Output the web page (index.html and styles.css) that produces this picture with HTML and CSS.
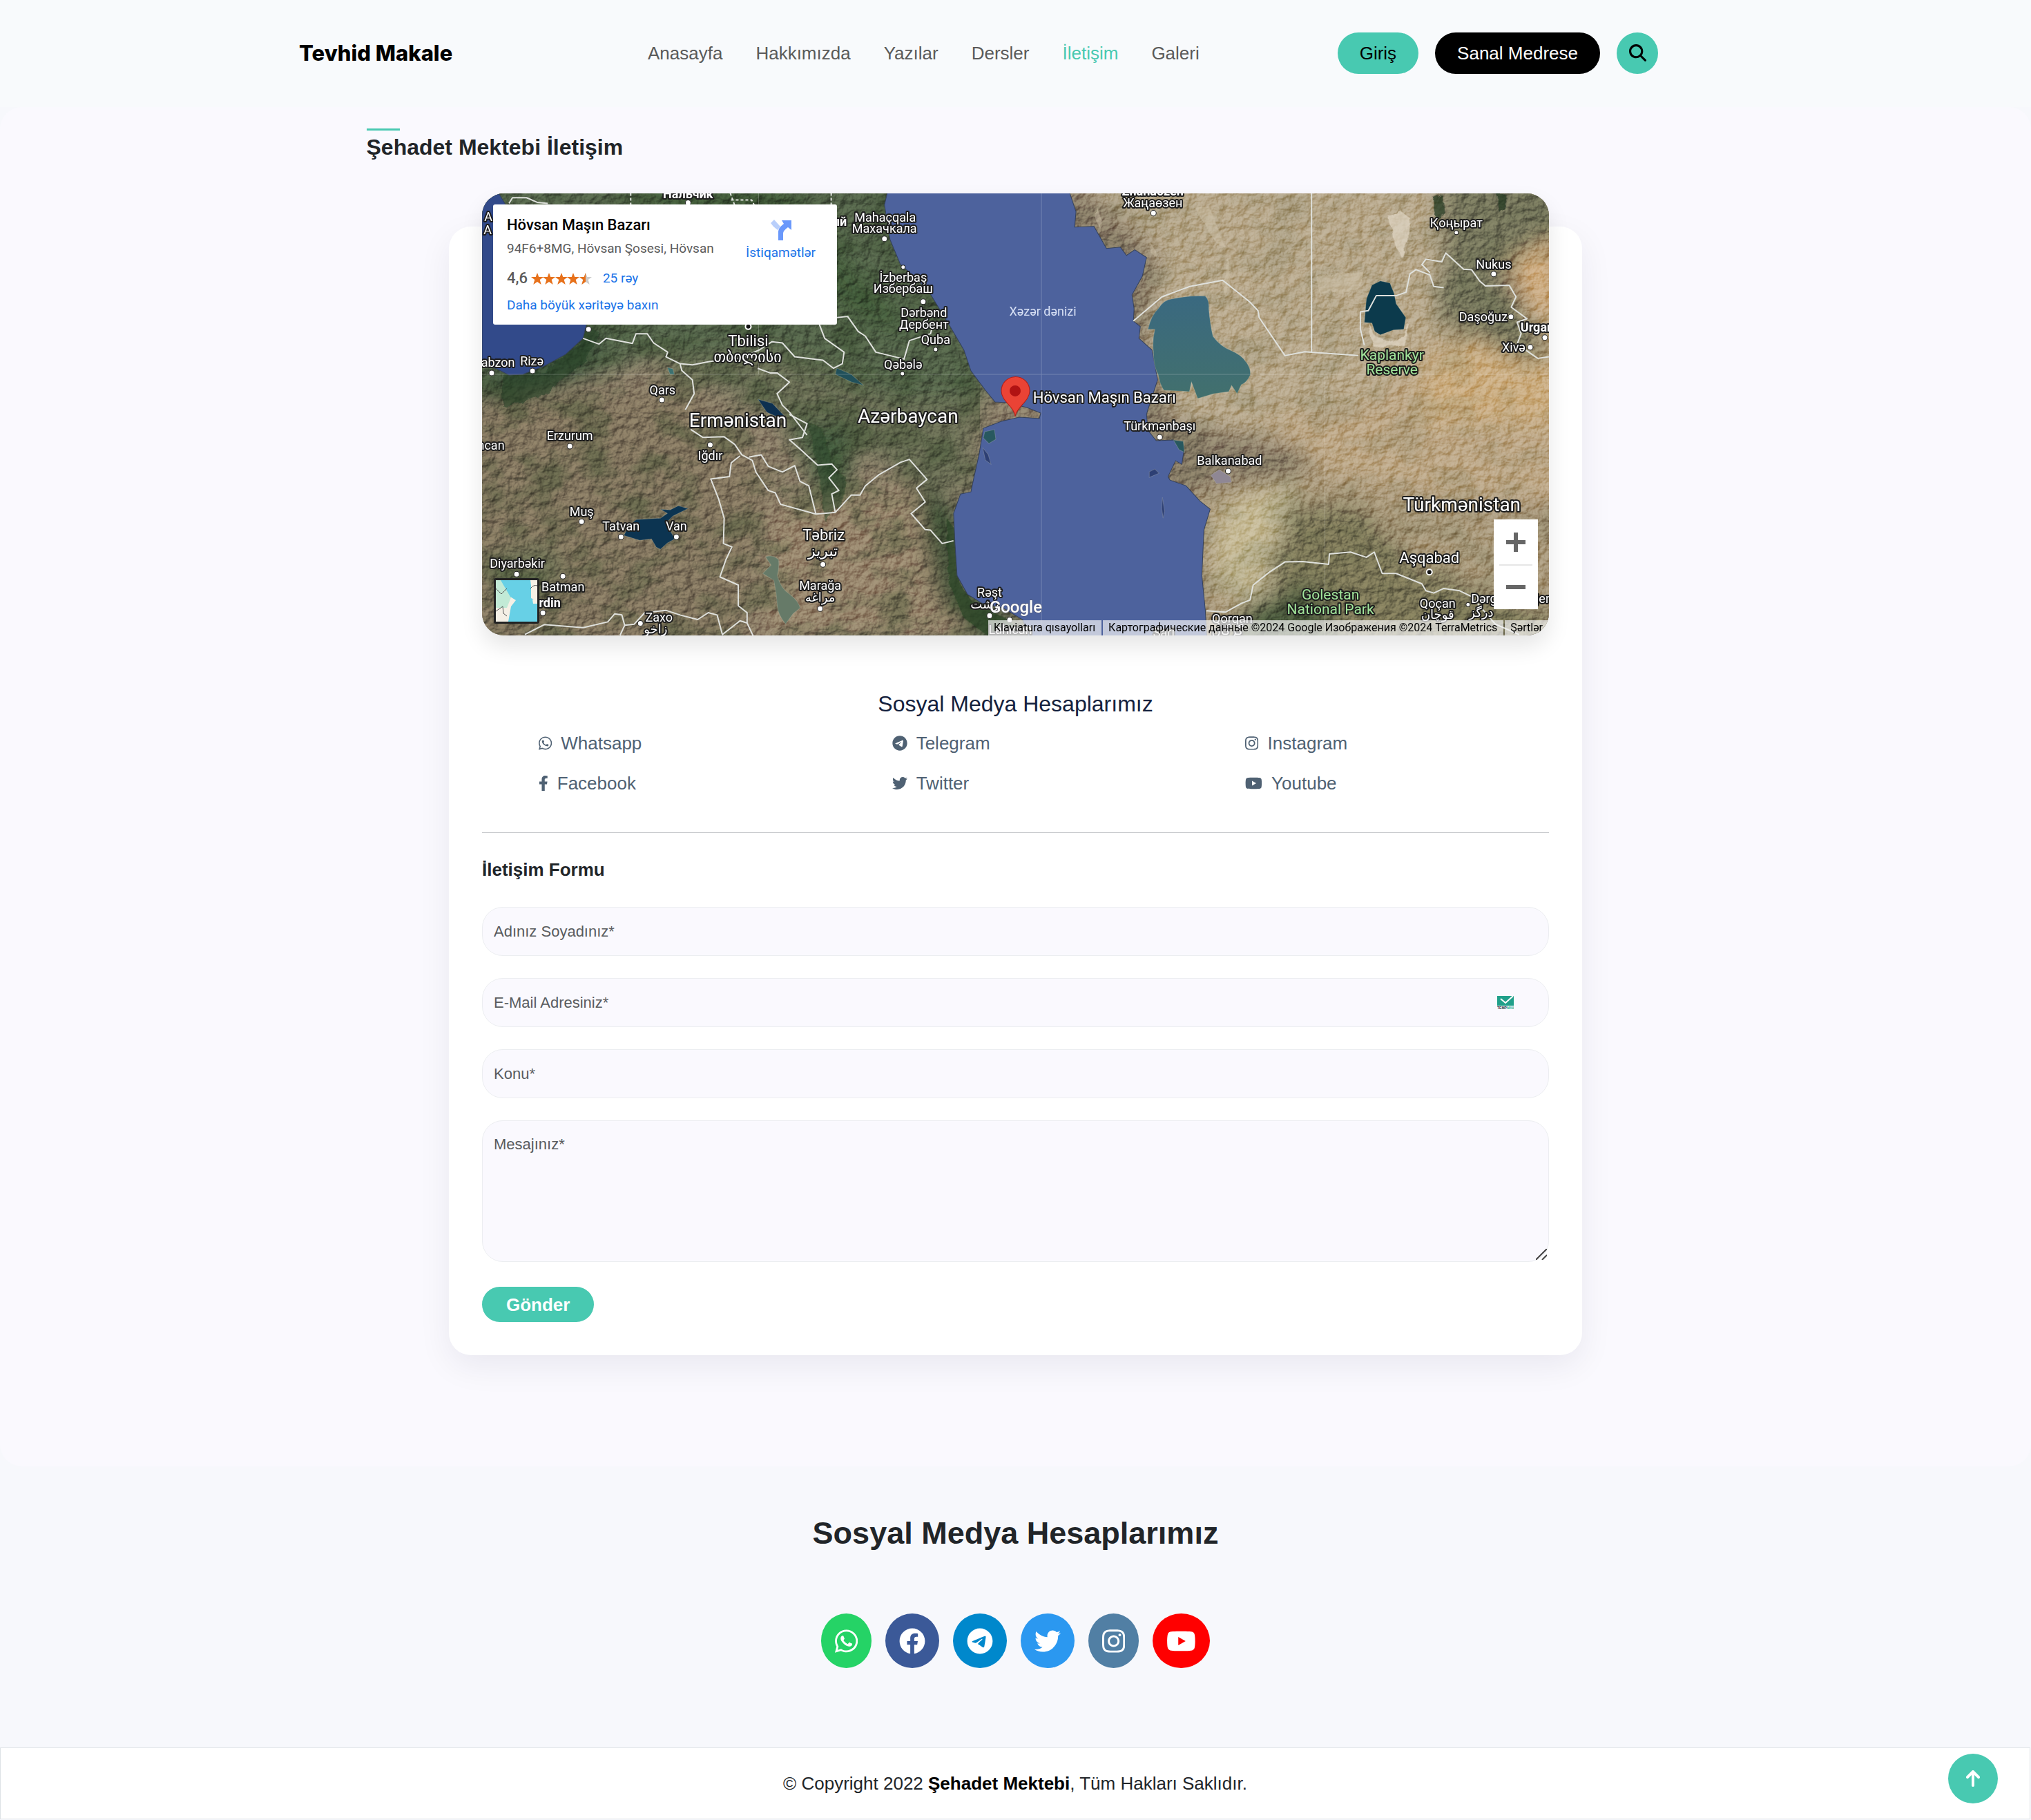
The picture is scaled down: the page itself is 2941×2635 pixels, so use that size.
FILE: index.html
```html
<!DOCTYPE html>
<html lang="tr">
<head>
<meta charset="utf-8">
<meta name="viewport" content="width=device-width, initial-scale=1">
<title>Tevhid Makale - İletişim</title>
<link rel="stylesheet" href="styles.css">
</head>
<body>
<svg class="sprite" aria-hidden="true">
  <symbol id="i-whatsapp" viewBox="0 0 448 512"><path d="M380.9 97.1C339 55.1 283.2 32 223.9 32c-122.4 0-222 99.6-222 222 0 39.1 10.2 77.3 29.6 111L0 480l117.7-30.9c32.4 17.7 68.9 27 106.1 27h.1c122.3 0 224.1-99.6 224.1-222 0-59.3-25.2-115-67.1-157zm-157 341.6c-33.2 0-65.7-8.9-94-25.7l-6.7-4-69.8 18.3L72 359.2l-4.4-7c-18.5-29.4-28.2-63.3-28.2-98.2 0-101.7 82.8-184.5 184.6-184.5 49.3 0 95.6 19.2 130.4 54.1 34.8 34.9 56.2 81.2 56.1 130.5 0 101.8-84.9 184.6-186.6 184.6zm101.2-138.2c-5.5-2.8-32.8-16.2-37.9-18-5.1-1.9-8.8-2.8-12.5 2.8-3.7 5.6-14.3 18-17.6 21.8-3.2 3.7-6.5 4.2-12 1.4-32.6-16.3-54-29.1-75.5-66-5.7-9.8 5.7-9.1 16.3-30.3 1.8-3.7.9-6.9-.5-9.7-1.4-2.8-12.5-30.1-17.1-41.2-4.5-10.8-9.1-9.3-12.5-9.5-3.2-.2-6.9-.2-10.6-.2-3.7 0-9.7 1.4-14.8 6.9-5.1 5.6-19.4 19-19.4 46.3 0 27.3 19.9 53.7 22.6 57.4 2.8 3.7 39.1 59.7 94.8 83.8 35.2 15.2 49 16.5 66.6 13.9 10.7-1.6 32.8-13.4 37.4-26.4 4.6-13 4.6-24.1 3.2-26.4-1.3-2.5-5-3.9-10.5-6.6z"/></symbol>
  <symbol id="i-facebook-f" viewBox="0 0 320 512"><path d="M279.14 288l14.22-92.66h-88.91v-60.13c0-25.35 12.42-50.06 52.24-50.06h40.42V6.26S260.43 0 225.36 0c-73.22 0-121.08 44.38-121.08 124.72v70.62H22.89V288h81.39v224h100.17V288z"/></symbol>
  <symbol id="i-facebook" viewBox="0 0 512 512"><path d="M504 256C504 119 393 8 256 8S8 119 8 256c0 123.78 90.69 226.38 209.25 245V327.69h-63V256h63v-54.64c0-62.15 37-96.48 93.67-96.48 27.14 0 55.52 4.84 55.52 4.84v61h-31.28c-30.8 0-40.41 19.12-40.41 38.73V256h68.78l-11 71.69h-57.78V501C413.31 482.38 504 379.78 504 256z"/></symbol>
  <symbol id="i-telegram" viewBox="0 0 496 512"><path d="M248,8C111.033,8,0,119.033,0,256S111.033,504,248,504,496,392.967,496,256,384.967,8,248,8ZM362.952,176.66c-3.732,39.215-19.881,134.378-28.1,178.3-3.476,18.584-10.322,24.816-16.948,25.425-14.4,1.326-25.338-9.517-39.287-18.661-21.827-14.308-34.158-23.215-55.346-37.177-24.485-16.135-8.612-25,5.342-39.5,3.652-3.793,67.107-61.51,68.335-66.746.153-.655.3-3.1-1.154-4.384s-3.59-.849-5.135-.5q-3.283.746-104.608,69.142-14.845,10.194-26.894,9.934c-8.855-.191-25.888-5.006-38.551-9.123-15.531-5.048-27.875-7.717-26.8-16.291q.84-6.7,18.45-13.7,108.446-47.248,144.628-62.3c68.872-28.647,83.183-33.623,92.511-33.789,2.052-.034,6.639.474,9.61,2.885a10.452,10.452,0,0,1,3.53,6.716A43.765,43.765,0,0,1,362.952,176.66Z"/></symbol>
  <symbol id="i-twitter" viewBox="0 0 512 512"><path d="M459.37 151.716c.325 4.548.325 9.097.325 13.645 0 138.72-105.583 298.558-298.558 298.558-59.452 0-114.68-17.219-161.137-47.106 8.447.974 16.568 1.299 25.34 1.299 49.055 0 94.213-16.568 130.274-44.832-46.132-.975-84.792-31.188-98.112-72.772 6.498.974 12.995 1.624 19.818 1.624 9.421 0 18.843-1.3 27.614-3.573-48.081-9.747-84.143-51.98-84.143-102.985v-1.299c13.969 7.797 30.214 12.67 47.431 13.319-28.264-18.843-46.781-51.005-46.781-87.391 0-19.492 5.197-37.36 14.294-52.954 51.655 63.675 129.3 105.258 216.365 109.807-1.624-7.797-2.599-15.918-2.599-24.04 0-57.828 46.782-104.934 104.934-104.934 30.213 0 57.502 12.67 76.67 33.137 23.715-4.548 46.456-13.32 66.599-25.34-7.798 24.366-24.366 44.833-46.132 57.827 21.117-2.273 41.584-8.122 60.426-16.243-14.292 20.791-32.161 39.308-52.628 54.253z"/></symbol>
  <symbol id="i-instagram" viewBox="0 0 448 512"><path d="M224.1 141c-63.6 0-114.9 51.3-114.9 114.9s51.3 114.9 114.9 114.9S339 319.5 339 255.9 287.7 141 224.1 141zm0 189.6c-41.1 0-74.7-33.5-74.7-74.7s33.5-74.7 74.7-74.7 74.7 33.5 74.7 74.7-33.6 74.7-74.7 74.7zm146.4-194.3c0 14.9-12 26.8-26.8 26.8-14.9 0-26.8-12-26.8-26.8s12-26.8 26.8-26.8 26.8 12 26.8 26.8zm76.1 27.2c-1.7-35.9-9.9-67.7-36.2-93.9-26.2-26.2-58-34.4-93.9-36.2-37-2.1-147.9-2.1-184.9 0-35.8 1.7-67.6 9.9-93.9 36.1s-34.4 58-36.2 93.9c-2.1 37-2.1 147.9 0 184.9 1.7 35.9 9.9 67.7 36.2 93.9s58 34.4 93.9 36.2c37 2.1 147.9 2.1 184.9 0 35.9-1.7 67.7-9.9 93.9-36.2 26.2-26.2 34.4-58 36.2-93.9 2.1-37 2.1-147.8 0-184.8zM398.8 388c-7.8 19.6-22.9 34.7-42.6 42.6-29.5 11.7-99.5 9-132.1 9s-102.7 2.6-132.1-9c-19.6-7.8-34.7-22.9-42.6-42.6-11.7-29.5-9-99.5-9-132.1s-2.6-102.7 9-132.1c7.8-19.6 22.9-34.7 42.6-42.6 29.5-11.7 99.5-9 132.1-9s102.7-2.6 132.1 9c19.6 7.8 34.7 22.9 42.6 42.6 11.7 29.5 9 99.5 9 132.1s2.7 102.7-9 132.1z"/></symbol>
  <symbol id="i-youtube" viewBox="0 0 576 512"><path d="M549.655 124.083c-6.281-23.65-24.787-42.276-48.284-48.597C458.781 64 288 64 288 64S117.22 64 74.629 75.486c-23.497 6.322-42.003 24.947-48.284 48.597-11.412 42.867-11.412 132.305-11.412 132.305s0 89.438 11.412 132.305c6.281 23.65 24.787 41.5 48.284 47.821C117.22 448 288 448 288 448s170.78 0 213.371-11.486c23.497-6.321 42.003-24.171 48.284-47.821 11.412-42.867 11.412-132.305 11.412-132.305s0-89.438-11.412-132.305zm-317.51 213.508V175.185l142.739 81.205-142.739 81.201z"/></symbol>
</svg>

<header class="site-header">
  <div class="header-inner">
    <a class="logo" href="#">Tevhid Makale</a>
    <nav class="main-nav">
      <a href="#">Anasayfa</a>
      <a href="#">Hakkımızda</a>
      <a href="#">Yazılar</a>
      <a href="#">Dersler</a>
      <a href="#" class="active" aria-current="page">İletişim</a>
      <a href="#">Galeri</a>
    </nav>
    <div class="header-actions">
      <a class="pill pill-teal" href="#">Giriş</a>
      <a class="pill pill-black" href="#">Sanal Medrese</a>
      <button class="search-btn" type="button" aria-label="Ara">
        <svg viewBox="0 0 512 512" width="25" height="25"><path d="M416 208c0 45.9-14.9 88.3-40 122.7L502.6 457.4c12.5 12.5 12.5 32.8 0 45.3s-32.8 12.5-45.3 0L330.7 376c-34.4 25.2-76.8 40-122.7 40C93.1 416 0 322.9 0 208S93.1 0 208 0S416 93.1 416 208zM208 352a144 144 0 1 0 0-288 144 144 0 1 0 0 288z"/></svg>
      </button>
    </div>
  </div>
</header>

<main class="contact">
  <div class="title-wrap">
    <h1 class="page-title">Şehadet Mektebi İletişim</h1>
  </div>

  <section class="card">
    <div class="map">
      <svg class="map-canvas" viewBox="0 0 1543 640" preserveAspectRatio="xMidYMid slice" role="img" aria-label="Xəritə">
        <defs>
          <filter id="soft" x="-20%" y="-20%" width="140%" height="140%"><feGaussianBlur stdDeviation="16"/></filter>
          <filter id="relief" x="0" y="0" width="100%" height="100%" color-interpolation-filters="sRGB">
            <feTurbulence type="fractalNoise" baseFrequency="0.07 0.08" numOctaves="6" seed="11" result="n"/>
            <feDiffuseLighting in="n" surfaceScale="5" diffuseConstant="0.65" lighting-color="#fff"><feDistantLight azimuth="225" elevation="52"/></feDiffuseLighting>
          </filter>
          <filter id="patch" x="0" y="0" width="100%" height="100%">
            <feTurbulence type="fractalNoise" baseFrequency="0.016 0.024" numOctaves="7" seed="4"/>
            <feColorMatrix values="0 0 0 0 .03  0 0 0 0 .06  0 0 0 0 .02  3.6 0 0 0 -1.6"/>
          </filter>
          <filter id="rough"><feTurbulence type="fractalNoise" baseFrequency="0.06" numOctaves="3" seed="2"/><feDisplacementMap in="SourceGraphic" scale="9"/></filter>
          <linearGradient id="gulf" x1="0" y1="0" x2="0" y2="1"><stop offset="0" stop-color="#3a6980"/><stop offset="1" stop-color="#42706d"/></linearGradient>
        </defs>
        <rect width="1543" height="640" fill="#8a7d68"/>
        <g filter="url(#soft)">
          <path fill="#536448" d="M-40-40H620L740 290L560 330L420 270L260 230L60 300L-40 290z"/>
          <path fill="#3a5038" d="M80 205L180 190L160 260L60 300L-20 300L20 260z"/>
          <path fill="#405839" d="M200-30H420L520 90L640 210L560 190L420 100L240 20z"/>
          <path fill="#686c52" d="M240 240L420 230L600 300L720 300L700 440L600 400L500 350L380 300z"/>
          <path fill="#41573a" d="M430 330L540 330L530 430L490 470L470 380z"/>
          <path fill="#83765f" d="M40 300L300 280L420 400L380 660H-40V320z"/>
          <path fill="#97856c" d="M420 450L640 420L700 640H400z"/>
          <path fill="#666b50" d="M0 520L100 500L130 560L20 590z"/>
          <path fill="#354c30" d="M620 390L680 460L690 560L820 660H740L660 590L640 500z"/>
          <path fill="#b8a88b" d="M850-30H1400L1450 300L1250 380L1000 330L960 200L980 90z"/>
          <path fill="#bda786" d="M1400 190L1580 150V460L1240 420L1120 330L1290 300z"/>
          <path fill="#ccae82" d="M1370 240L1500 190L1560 260V330H1360z"/>
          <path fill="#76765c" d="M1380-40H1580V60L1460 110L1550 240L1500 240L1380 180L1390 80z"/>
          <path fill="#d0ae82" d="M1480 100L1560 60V180L1510 160z"/>
          <path fill="#aa9a7b" d="M1020 430L1200 400L1560 470V660H1040z"/>
          <path fill="#c6ba96" d="M1090 440L1180 420L1160 500L1130 600L1060 570L1060 480z"/>
          <path fill="#7d7859" d="M1170 450L1270 450L1340 530L1560 620V660H1150L1180 580L1130 560z"/>
          <path fill="#4b5a3c" d="M1110 590L1200 560L1240 660H1060z"/>
        </g>
        <rect class="map-patch-west" width="720" height="640" filter="url(#patch)"/>
        <rect class="map-patch-east" x="850" width="693" height="640" filter="url(#patch)"/>
        <rect class="map-relief" width="1543" height="640" filter="url(#relief)"/>
        <g filter="url(#rough)">
          <path fill="#e2d9c8" opacity=".7" d="M1312 34l14-10 16 12-4 35-9 22-12-30zM1280 185l8 36 46 0 8-36-10 22-20 8-20-8z"/>
          <path fill="#cfc4ab" opacity=".5" d="M1078 90l4 30-6 30-4-10zM1030 20l30 50 16 10-25-60zM890 20l7 20-3 12-6-15zM965 70l8 12 4 12-10-8zM1205 118l70-4-5 25-60 6z"/>
          <path fill="#1d3220" opacity=".7" d="M1375 8l14-6 3 26-12 10zM1466 0h12l3 20-9 8z"/>
          <path fill="#2c4627" opacity=".75" d="M672 470l14 20 2 70 20 30 50 25 30 30h-50l-40-30-22-50z"/>
          <path fill="#2c4627" opacity=".5" d="M470 330l22 10 16 60 18 10-5 40-26 24-6-60z"/>
          <path fill="#24402a" opacity=".6" d="M30 262l60-4 50-40 10-26 20 10-20 40-60 50-60 16z"/>
        </g>
        <g class="coast">
          <path fill="#4d629d" d="M586 0L582 17L590 67L605 103L628 123L649 147L677 193L697 227L707 257L728 285L742 302L759 303L788 310L808 318L806 326L777 324L751 330L725 340L719 377L711 413L707 432L692 435L682 463L684 507L687 553L702 580L723 593L754 600L782 617L790 640H1048L1046 603L1041 553L1044 487L1053 457L1038 445L1018 423L995 415L992 410L1003 387L1012 392L1015 373L1000 357L975 358L963 343L961 320L963 313L977 270L969 227L950 210L952 193L942 185L943 167L940 147L955 120L961 93L944 82L932 90L923 78L903 80L885 48L857 49L859 27L850 0z"/>
          <path fill="#324a8a" d="M0 0H24L60 60L151 190L146 210L121 233L90 250L59 262L39 263L19 253L0 250z"/>
        </g>
        <g class="lakes">
          <path fill="url(#gulf)" d="M998 153Q1020 148 1046 149Q1052 155 1051 167Q1053 190 1057 207Q1068 222 1084 228Q1098 234 1104 243Q1112 252 1111 263Q1106 274 1098 277L1092 290L1084 278L1080 287L1058 290L1035 297L1026 273L1023 287L986 285Q980 276 978 263Q971 250 971 230Q969 214 973 197L963 197Q968 176 978 167Q986 154 998 153z"/>
          <path fill="#0c3a4c" d="M1299 127L1313 130L1319 145L1322 160L1336 180L1333 197L1318 198L1299 205L1291 200L1287 188L1276 187L1279 153L1287 133z"/>
          <path fill="#0c3451" d="M205 495L213 480L223 472L258 470L268 463L258 457L272 458L284 452L298 456L276 467L266 477L272 488L279 500L268 506L258 515L252 512L245 500L228 502z"/>
          <path fill="#0d3050" d="M399 298L420 304L437 322L430 325L412 317z"/>
          <path fill="#667a68" d="M410 526Q420 522 429 530Q430 542 427 553Q432 572 445 580Q458 590 460 600L450 608L439 623Q428 610 427 597Q426 578 422 560L406 550L418 538z"/>
          <path fill="#21505a" d="M513 253L534 262L552 278L534 273L511 262z"/>
          <path fill="#28585f" d="M727 345l14-3 2 14-10 6-8-8zM1000 357l14 2 2 16-8-4z"/>
          <path fill="#2d3f74" d="M965 403l8-4 6 6-14 6zM724 368l8 10 4 14-8-6zM984 440l3 20-2 10-2-14z"/>
          <path fill="#3c7170" d="M268 252l8 2 2 8-6 0z"/>
          <path fill="#8f8794" d="M1054 408l12-8 16 10 2 8-22 2z"/>
        </g>
        <path class="grid-line" d="M809 0V640M0 262H1543M400 0V262M1219 262V640"/>
        <g class="borders">
          <g transform="matrix(.5102 0 0 .3333 -58 -20)">
            <path d="M400 690L445 715L465 690L540 712L550 670L582 670L600 710L640 750L635 770L675 800L710 805L760 790L850 775L900 740L935 705L965 710L1000 770L1080 785L1110 820L1135 800L1140 750L1085 690L1070 630M675 800L680 830L710 870L715 930L690 1000M895 820L930 840L950 840L985 880L950 930L965 980L985 1010L1035 1110M1120 600L1150 595L1180 660L1200 680L1230 750L1310 780L1325 700L1385 670L1390 640M190 105L200 80L240 80L270 100L300 105"/>
          </g>
          <g transform="matrix(.5102 0 0 .3333 -58 320)">
            <path d="M705 65L740 100L800 97L830 130L850 175L880 200L890 250L925 330L945 340L960 390L1060 432L1115 425L1160 350L1185 350L1200 310L1240 260L1300 208L1325 195L1375 282L1345 320L1370 380L1330 430L1370 500L1385 502L1418 560L1450 548M845 180L820 210L815 270L762 280L785 370L800 450L798 560L822 575L805 630L788 705L840 740L840 830L865 860L865 905L845 895L795 955L780 870L755 860L725 890L675 870L635 850L575 860L545 910L518 915L510 870L490 865L470 900L400 925L290 912L235 955M518 915L505 958M865 905L882 960M985 0L1035 40L1022 100L985 110L1015 150L1065 220L1105 215L1120 240L1097 275L1125 330L1105 345L1115 425M870 185L905 175L925 225L965 250L1000 222L1015 290L1040 310L1060 432"/>
          </g>
          <g transform="matrix(.574 0 0 .3333 702 -20)">
            <path d="M418 615L490 510L560 465L643 438L710 530L732 570L735 600L800 765L850 748L985 765M867 60V748M1000 720L990 650L990 575L1010 570L1030 505L1080 505L1105 490L1115 410L1130 392L1165 415L1175 465L1200 470M1165 405L1145 370L1155 347L1195 358L1205 320L1250 390L1270 392L1290 440L1305 463L1365 460L1382 510L1370 555L1410 605L1385 620L1395 670L1385 715L1437 777L1465 770"/>
          </g>
          <g transform="matrix(.574 0 0 .3333 702 320)">
            <path d="M602 852L650 858L690 820L712 805L720 740L760 685L800 640L845 638L910 650L912 605L965 597L1005 620L1025 597L1045 690L1080 690L1145 735L1155 765L1175 775L1200 755L1240 765L1270 790L1330 910L1390 955"/>
          </g>
          <path class="dashed" d="M215 0V40M359 0L370 30M360 10h30l15 30M505 0V30"/>
        </g>
        <g class="dots">
          <circle cx="298" cy="14" r="4"/><circle cx="582" cy="66" r="4"/><circle cx="609" cy="107" r="3"/><circle cx="638" cy="157" r="4"/><circle cx="656" cy="226" r="3"/><circle cx="608" cy="261" r="3"/><circle cx="73" cy="257" r="4"/><circle cx="14" cy="260" r="4"/><circle cx="154" cy="197" r="4"/><circle cx="260" cy="299" r="4"/><circle cx="127" cy="366" r="4"/><circle cx="330" cy="364" r="4"/><circle cx="144" cy="475" r="4"/><circle cx="201" cy="497" r="4"/><circle cx="281" cy="497" r="4"/><circle cx="493" cy="537" r="4"/><circle cx="489" cy="601" r="4"/><circle cx="50" cy="551" r="4"/><circle cx="117" cy="554" r="4"/><circle cx="88" cy="607" r="4"/><circle cx="229" cy="622" r="4"/><circle cx="971" cy="29" r="4"/><circle cx="1409" cy="57" r="3"/><circle cx="1463" cy="117" r="4"/><circle cx="1488" cy="179" r="4"/><circle cx="1537" cy="209" r="4"/><circle cx="1516" cy="223" r="4"/><circle cx="980" cy="353" r="4"/><circle cx="1079" cy="402" r="4"/><circle cx="1426" cy="595" r="3"/><circle cx="734" cy="611" r="4"/><circle cx="763" cy="617" r="4"/>
          <circle class="capital" cx="385" cy="193" r="4"/><circle class="capital" cx="1370" cy="548" r="4"/>
        </g>
        <g class="labels city">
          <text class="strong" x="298" y="7">Нальчик</text><text class="strong" x="510" y="47">ный</text>
          <text x="9" y="40">A</text><text x="8" y="59">A</text>
          <text x="583" y="41">Mahaçqala</text><text x="582" y="57">Махачкала</text>
          <text x="609" y="128">İzberbaş</text><text x="609" y="144">Избербаш</text>
          <text x="639" y="179">Dərbənd</text><text x="639" y="196">Дербент</text>
          <text x="656" y="218">Quba</text><text x="609" y="254">Qəbələ</text>
          <text x="72" y="249">Rizə</text><text x="23" y="251">abzon</text><text x="261" y="291">Qars</text>
          <text x="127" y="357">Erzurum</text><text x="13" y="371">ncan</text><text x="330" y="386">Iğdır</text>
          <text x="144" y="467">Muş</text><text x="201" y="488">Tatvan</text><text x="281" y="488">Van</text>
          <text x="489" y="574">Marağa</text><text x="489" y="591">مراغه</text>
          <text x="51" y="542">Diyarbəkir</text><text x="117" y="576">Batman</text><text class="strong" x="98" y="599">rdin</text>
          <text x="256" y="620">Zaxo</text><text x="251" y="637">زاخو</text>
          <text class="strong" x="970" y="3">Zhanaozen</text><text x="970" y="20">Жаңаөзен</text>
          <text x="1409" y="49">Қоңырат</text><text x="1463" y="109">Nukus</text><text x="1448" y="185">Daşoğuz</text>
          <text class="strong" x="1526" y="200">Urgan</text><text x="1492" y="229">Xivə</text>
          <text x="980" y="343">Türkmənbaşı</text><text x="1081" y="393">Balkanabad</text>
          <text x="1382" y="600">Qoçan</text><text x="1382" y="616">قوچان</text><text x="1449" y="593">Dərg</text><text x="1445" y="613">درگز</text><text x="1536" y="593">jen</text>
          <text x="734" y="584">Rəşt</text><text x="727" y="601">رشت</text><text x="764" y="638">Lahıcan</text>
          <text x="1085" y="622">Qorqan</text><text x="1078" y="639">گرگان</text><text x="986" y="642">Sari</text>
        </g>
        <g class="labels big">
          <text x="385" y="221">Tbilisi</text><text x="384" y="244">თბილისი</text>
          <text x="494" y="502">Təbriz</text><text x="493" y="525">تبریز</text><text x="1370" y="535">Aşqabad</text>
          <text x="900" y="303">Hövsan Maşın Bazarı</text>
        </g>
        <g class="labels country"><text x="370" y="338">Ermənistan</text><text x="616" y="332">Azərbaycan</text><text x="1417" y="460">Türkmənistan</text></g>
        <g class="labels park"><text x="1316" y="241">Kaplankyr</text><text x="1316" y="262">Reserve</text><text x="1227" y="588">Golestan</text><text x="1227" y="609">National Park</text></g>
        <text class="sea-label" x="811" y="177">Xəzər dənizi</text>
        <text class="google" x="772" y="607">Google</text>
        <path fill="#ea4335" stroke="#b51d14" d="M771 323C770 309 751 301 751 286a20.500 20.500 0 0 1 41 0C792 301 773 309 771 323z"/>
        <circle cx="771" cy="286" r="8" fill="#b11313"/>
      </svg>

      <div class="place-card">
        <div class="place-info">
          <p class="place-name">Hövsan Maşın Bazarı</p>
          <p class="place-address">94F6+8MG, Hövsan Şosesi, Hövsan</p>
          <p class="place-rating">
            <span class="score">4,6</span>
            <svg width="88" height="17" viewBox="0 0 88 17" aria-hidden="true">
              <defs><path id="star" d="M9 0l2.300 6H18l-5.300 4 2 7L9 13l-5.700 4 2-7L0 6h6.700z"/><clipPath id="half"><path d="M0 0h9v17H0z"/></clipPath></defs>
              <g fill="#e7711b"><use href="#star"/><use href="#star" x="17"/><use href="#star" x="35"/><use href="#star" x="52"/></g>
              <g transform="translate(70)"><use href="#star" fill="#ccc"/><use href="#star" fill="#e7711b" clip-path="url(#half)"/></g>
            </svg>
            <a href="#">25 rəy</a>
          </p>
          <a class="place-more" href="#">Daha böyük xəritəyə baxın</a>
        </div>
        <a class="directions" href="#">
          <svg width="30" height="30" viewBox="0 0 30 30" aria-hidden="true"><path fill="#b9cffb" d="M5 0l9 10-4 5-6-5-4-5z"/><path fill="#6a98fb" d="M11 30V17q0-5 8-11l-3-5h14v14l-5-4q-7 5-7 9v10z"/></svg>
          İstiqamətlər
        </a>
      </div>

      <button class="map-type" type="button" aria-label="Xəritə görünüşü">
        <svg viewBox="0 0 60 60" width="60" height="60"><rect width="60" height="60" fill="#f5f0e6"/><path fill="#c2ead6" d="M0 0h8l14 25-6 15H0z"/><path fill="#67d0e6" d="M7 0h44v26l9 4v30H18l4-22 7-9-8-5z"/><path fill="#f5f0e6" d="M50 0h10v14l-8 2zM53 28l7-3v9h-6z"/><path fill="none" stroke="#555" d="M0 12l8 8 8-8M0 45l10-7 1 10 5 4M50 12q5-6 10-4"/></svg>
      </button>
      <div class="zoom">
        <button type="button" aria-label="Yaxınlaşdır"><svg width="28" height="28" viewBox="0 0 28 28"><path d="M11 0h6v11h11v6H17v11h-6V17H0v-6h11z"/></svg></button>
        <button type="button" aria-label="Uzaqlaşdır"><svg width="28" height="28" viewBox="0 0 28 28"><path d="M0 11h28v6H0z"/></svg></button>
      </div>
      <div class="attribution">
        <button type="button">Klaviatura qısayolları</button>
        <span>Картографические данные ©2024 Google Изображения ©2024 TerraMetrics</span>
        <a href="#">Şərtlər</a>
      </div>
    </div>

    <h2 class="social-title">Sosyal Medya Hesaplarımız</h2>
    <ul class="social-list">
      <li><a href="#"><svg class="w-448"><use href="#i-whatsapp"/></svg>Whatsapp</a></li>
      <li><a href="#"><svg class="w-512"><use href="#i-telegram"/></svg>Telegram</a></li>
      <li><a href="#"><svg class="w-448"><use href="#i-instagram"/></svg>Instagram</a></li>
      <li><a href="#"><svg class="w-320"><use href="#i-facebook-f"/></svg>Facebook</a></li>
      <li><a href="#"><svg class="w-512"><use href="#i-twitter"/></svg>Twitter</a></li>
      <li><a href="#"><svg class="w-576"><use href="#i-youtube"/></svg>Youtube</a></li>
    </ul>
    <hr class="divider">

    <form class="contact-form">
      <h2 class="form-title">İletişim Formu</h2>
      <div class="field"><label class="sr-only" for="name">Adınız Soyadınız</label><input id="name" type="text" placeholder="Adınız Soyadınız*"></div>
      <div class="field">
        <label class="sr-only" for="email">E-Mail Adresiniz</label><input id="email" type="email" placeholder="E-Mail Adresiniz*">
        <svg class="mail-badge" width="24" height="20" viewBox="0 0 24 20" aria-hidden="true"><path fill="#20a08a" d="M0 0h24v14H0z"/><path fill="none" stroke="#fff" stroke-width="2" d="M5 4l7 6L23 0"/><text x="0" y="19"><tspan fill="#1c2b3a">TEMP</tspan><tspan fill="#20b394">MAIL</tspan></text></svg>
      </div>
      <div class="field"><label class="sr-only" for="subject">Konu</label><input id="subject" type="text" placeholder="Konu*"></div>
      <div class="field">
        <label class="sr-only" for="message">Mesajınız</label><textarea id="message" placeholder="Mesajınız*"></textarea>
        <svg class="grip" width="16" height="16" viewBox="0 0 16 16" aria-hidden="true"><path d="M0 16L16 0M9 16L16 9"/></svg>
      </div>
      <button class="submit" type="submit">Gönder</button>
    </form>
  </section>
</main>

<section class="follow">
  <h2>Sosyal Medya Hesaplarımız</h2>
  <div class="follow-links">
    <a class="wa" href="#" aria-label="Whatsapp"><svg class="w-448"><use href="#i-whatsapp"/></svg></a>
    <a class="fb" href="#" aria-label="Facebook"><svg class="w-512"><use href="#i-facebook"/></svg></a>
    <a class="tg" href="#" aria-label="Telegram"><svg class="w-512"><use href="#i-telegram"/></svg></a>
    <a class="tw" href="#" aria-label="Twitter"><svg class="w-512"><use href="#i-twitter"/></svg></a>
    <a class="ig" href="#" aria-label="Instagram"><svg class="w-448"><use href="#i-instagram"/></svg></a>
    <a class="yt" href="#" aria-label="Youtube"><svg class="w-576"><use href="#i-youtube"/></svg></a>
  </div>
</section>

<footer class="site-footer">© Copyright 2022&nbsp;<strong>Şehadet Mektebi</strong>, Tüm Hakları Saklıdır.</footer>
<a class="to-top" href="#" aria-label="Yukarı çık"><svg width="20" height="24" viewBox="0 0 20 24"><path d="M10 22V2M2 10l8-8 8 8"/></svg></a>
</body>
</html>
```
FILE: styles.css
```css
:root {
  --teal: #48c9b1;
  --ink: #212529;
  --page: #f7f8fc;
  --panel: #faf9fe;
}

* { box-sizing: border-box; }

body {
  margin: 0;
  background: var(--page);
  color: var(--ink);
  font: 26px/30px "Liberation Sans", Arial, sans-serif;
}

h1, h2, p, ul { margin: 0; padding: 0; }
ul { list-style: none; }
a { color: inherit; text-decoration: none; }
button { border: 0; padding: 0; font: inherit; cursor: pointer; }
svg { display: block; fill: currentColor; }
.sprite { position: absolute; width: 0; height: 0; }
.sr-only { position: absolute; width: 1px; height: 1px; overflow: hidden; clip-path: inset(50%); }

/* header */
.site-header { background: #f8fafc; }
.header-inner {
  max-width: 2075px;
  height: 155px;
  margin: 0 auto;
  padding: 0 107px 2px 0;
  display: grid;
  grid-template-columns: 505px 1fr auto;
  align-items: center;
}
.logo { font: 800 31px/40px Inter, "Liberation Sans", sans-serif; color: #000; }
.main-nav { display: flex; gap: 48px; color: #5a5a5a; }
.main-nav .active { color: var(--teal); }
.header-actions { display: flex; gap: 24px; align-items: center; }
.pill { height: 60px; padding: 0 32px; border-radius: 30px; display: flex; align-items: center; }
.pill-teal { background: var(--teal); color: #000; }
.pill-black { background: #000; color: #fff; }
.search-btn { width: 60px; height: 60px; border-radius: 50%; background: var(--teal); color: #000; display: grid; place-items: center; }

/* contact section */
.contact { background: var(--panel); border-radius: 32px; padding: 31px 24px 161px; }
.title-wrap { max-width: 1880px; margin: 0 auto; }
.title-wrap::before { content: ""; display: block; width: 48px; height: 3px; margin-bottom: 5px; background: var(--teal); }
.page-title { font-size: 32px; line-height: 38px; }

.card {
  max-width: 1641px;
  margin: 96px auto 0;
  padding: 0 48px 48px;
  border-radius: 32px;
  background: #fff;
  box-shadow: 0 16px 48px rgba(20, 20, 60, .07);
}

/* map */
.map {
  position: relative;
  height: 640px;
  transform: translateY(-48px);
  margin-bottom: -48px;
  border-radius: 32px;
  overflow: hidden;
  box-shadow: 0 16px 32px rgba(0, 0, 0, .1);
  font-family: Roboto, "Liberation Sans", sans-serif;
}
.map-canvas { width: 100%; height: 100%; }
.map-relief { mix-blend-mode: overlay; opacity: .5; }
.map-patch-west { opacity: .36; }
.map-patch-east { opacity: .1; }
.coast path { stroke: #35425c; stroke-width: 1; }
.lakes path { stroke: #cfd0bb; stroke-opacity: .25; }
.grid-line { fill: none; stroke: #fff; stroke-opacity: .22; }
.borders path { fill: none; stroke: #dfe1dd; stroke-width: 2; stroke-linejoin: round; vector-effect: non-scaling-stroke; }
.borders .dashed { stroke-width: 2; stroke-dasharray: 4 3; }
.dots circle { fill: #fff; stroke: #222; stroke-width: 1; }
.dots .capital { fill: #111; stroke: #fff; stroke-width: 2; }
.labels { fill: #fff; stroke: #1d1d1d; stroke-width: 4; stroke-linejoin: round; paint-order: stroke; text-anchor: middle; font-family: Roboto, "DejaVu Sans", sans-serif; }
.labels .strong { font-weight: 700; }
.city { font-size: 18px; }
.big { font-size: 22px; }
.country { font-size: 28px; }
.park { font-size: 21px; fill: #a2e59b; }
.sea-label { font-size: 18px; fill: #d7e0f5; text-anchor: middle; }
.google { font-size: 24px; font-weight: 500; fill: #fff; stroke: #556; stroke-width: 1; paint-order: stroke; text-anchor: middle; }

.place-card {
  position: absolute;
  top: 16px;
  left: 16px;
  width: 498px;
  height: 174px;
  padding: 16px 20px;
  display: flex;
  justify-content: space-between;
  background: #fff;
  border-radius: 3px;
  font-size: 19px;
  line-height: 26px;
}
.place-card a { color: #1a73e8; }
.place-name { font-size: 22px; line-height: 28px; font-weight: 500; color: #000; }
.place-address { margin-top: 7px; color: #5b5b5b; white-space: nowrap; }
.place-rating { display: flex; align-items: center; margin-top: 16px; line-height: 28px; }
.place-rating a { margin-left: 16px; }
.score { margin-right: 5px; font-size: 22px; font-weight: 500; color: #5b5b5b; }
.place-more { display: block; margin-top: 12px; }
.directions { display: flex; flex-direction: column; align-items: center; gap: 5px; padding: 6px 11px 0 0; }

.map-type { position: absolute; left: 17px; bottom: 17px; width: 66px; height: 66px; border: 3px solid #222; border-radius: 3px; overflow: hidden; }
.zoom { position: absolute; right: 16px; bottom: 38px; width: 64px; background: #fff; color: #666; }
.zoom button { position: relative; display: grid; place-items: center; width: 64px; height: 65px; background: none; color: #666; }
.zoom button + button::before { content: ""; position: absolute; top: 0; left: 8px; right: 8px; height: 2px; background: #e6e6e6; }
.attribution { position: absolute; right: 0; bottom: 0; display: flex; height: 22px; gap: 2px; font-size: 16px; line-height: 22px; color: #000; white-space: nowrap; }
.attribution > * { padding: 0 9px 0 8px; background: rgba(245, 245, 245, .7); color: #000; }

/* social accounts list */
.w-320 { aspect-ratio: 320 / 512; }
.w-448 { aspect-ratio: 448 / 512; }
.w-512 { aspect-ratio: 1; }
.w-576 { aspect-ratio: 576 / 512; }
.social-title { margin-top: 80px; font-size: 32px; line-height: 38px; font-weight: 400; text-align: center; color: #14213d; }
.social-list { display: grid; grid-template-columns: repeat(3, 1fr); gap: 28px 0; margin-top: 23px; padding: 0 5px; color: #4f6173; }
.social-list li { display: flex; padding-left: 77px; }
.social-list a { display: flex; align-items: center; gap: 13px; }
.social-list svg { height: 22px; }
.divider { margin: 56px 0 38px; border: 0; border-top: 1px solid #c5c7ca; }

/* form */
.form-title { margin-bottom: 39px; font-size: 26px; line-height: 30px; }
.field { position: relative; margin-bottom: 32px; }
.field input, .field textarea {
  display: block;
  width: 100%;
  height: 71px;
  padding: 0 16px;
  border: 1px solid #eceef1;
  border-radius: 30px;
  background: var(--panel);
  color: var(--ink);
  font: 22px/34px "Liberation Sans", Arial, sans-serif;
}
.field textarea { height: 205px; padding-top: 17px; resize: none; }
.field ::placeholder { color: #595c5f; opacity: 1; }
.mail-badge { position: absolute; right: 51px; top: 26px; }
.mail-badge text { font: 700 5px "Liberation Sans", sans-serif; }
.grip { position: absolute; right: 3px; bottom: 3px; fill: none; stroke: #444; stroke-width: 2; }
.submit { display: block; margin-top: 36px; height: 51px; padding: 0 35px; border-radius: 26px; background: var(--teal); color: #fff; font-weight: 700; }

/* follow band */
.follow { padding: 71px 24px 115px; text-align: center; }
.follow h2 { font-size: 45px; line-height: 52px; }
.follow-links { display: flex; justify-content: center; gap: 20px; margin-top: 90px; color: #fff; }
.follow-links a { display: grid; place-items: center; height: 79px; padding: 0 20px; border-radius: 50%; }
.follow-links svg { height: 38px; }
.wa { background: #25d366; }
.fb { background: #3b5998; }
.tg { background: #0088cc; }
.tw { background: #2b98f0; }
.ig { background: #517fa4; }
.yt { background: #f00; }

/* footer */
.site-footer { display: flex; align-items: center; justify-content: center; height: 104px; margin: 0 1px 1px 0; border: 1px solid #dee2e6; background: #fff; }
.site-footer strong { color: #000; }
.to-top { position: fixed; right: 48px; bottom: 24px; width: 72px; height: 72px; border-radius: 50%; background: var(--teal); display: grid; place-items: center; }
.to-top svg { fill: none; stroke: #fff; stroke-width: 4; stroke-linecap: round; stroke-linejoin: round; }
```
